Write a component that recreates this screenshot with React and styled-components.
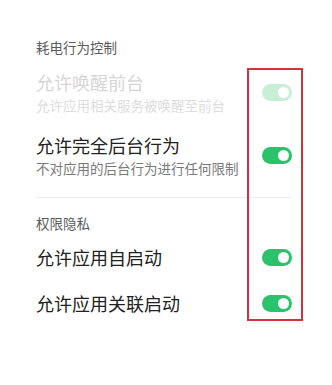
import React from "react";
import styled, { createGlobalStyle } from "styled-components";

const Global = createGlobalStyle`
  html, body { margin: 0; padding: 0; background: #fff; }
  body { font-family: "Noto Sans CJK SC", "Noto Sans", sans-serif; -webkit-font-smoothing: antialiased; }
`;

const Page = styled.div`
  position: relative;
  width: 332px;
  height: 385px;
  box-sizing: border-box;
  padding: 36px 40px 0 36px;
  background: #fff;
`;

const SectionTitle = styled.div`
  font-size: 13.5px;
  line-height: 22px;
  color: #5a5a5a;
  margin-bottom: ${(p) => p.$gap}px;
`;

const Row = styled.div`
  display: flex;
  align-items: center;
  justify-content: space-between;
  margin-bottom: ${(p) => p.$gap || 0}px;
`;

const Texts = styled.div`
  display: flex;
  flex-direction: column;
`;

const Title = styled.div`
  font-size: 18px;
  line-height: 24px;
  color: ${(p) => (p.$disabled ? "#d6d6d6" : "#222")};
`;

const Sub = styled.div`
  font-size: 13.5px;
  line-height: 20px;
  margin-top: 1px;
  color: ${(p) => (p.$disabled ? "#dddddd" : "#7a7a7a")};
`;

const Track = styled.div`
  width: 30px;
  height: 17px;
  border-radius: 9px;
  background: ${(p) => (p.$disabled ? "#c9eed8" : "#2bc26c")};
  display: flex;
  align-items: center;
  justify-content: flex-end;
  padding-right: 3px;
  box-sizing: border-box;
  flex-shrink: 0;
`;

const Knob = styled.div`
  width: 11px;
  height: 11px;
  border-radius: 50%;
  background: #fff;
`;

const Divider = styled.div`
  height: 1px;
  background: #eeeeee;
  margin: ${(p) => p.$m};
`;

const Highlight = styled.div`
  position: absolute;
  left: 247px;
  top: 68px;
  width: 56px;
  height: 253px;
  box-sizing: border-box;
  border: 2.6px solid #d2323b;
  pointer-events: none;
`;

function Toggle({ disabled }) {
  return (
    <Track $disabled={disabled}>
      <Knob />
    </Track>
  );
}

export default function App() {
  return (
    <>
      <Global />
      <Page>
        <SectionTitle $gap={12}>耗电行为控制</SectionTitle>
        <Row $gap={18}>
          <Texts>
            <Title $disabled>允许唤醒前台</Title>
            <Sub $disabled>允许应用相关服务被唤醒至前台</Sub>
          </Texts>
          <Toggle disabled />
        </Row>
        <Row>
          <Texts>
            <Title>允许完全后台行为</Title>
            <Sub>不对应用的后台行为进行任何限制</Sub>
          </Texts>
          <Toggle />
        </Row>
        <Divider $m="19px 0 14px" />
        <SectionTitle $gap={11}>权限隐私</SectionTitle>
        <Row $gap={22}>
          <Texts>
            <Title>允许应用自启动</Title>
          </Texts>
          <Toggle />
        </Row>
        <Row>
          <Texts>
            <Title>允许应用关联启动</Title>
          </Texts>
          <Toggle />
        </Row>
        <Highlight />
      </Page>
    </>
  );
}
